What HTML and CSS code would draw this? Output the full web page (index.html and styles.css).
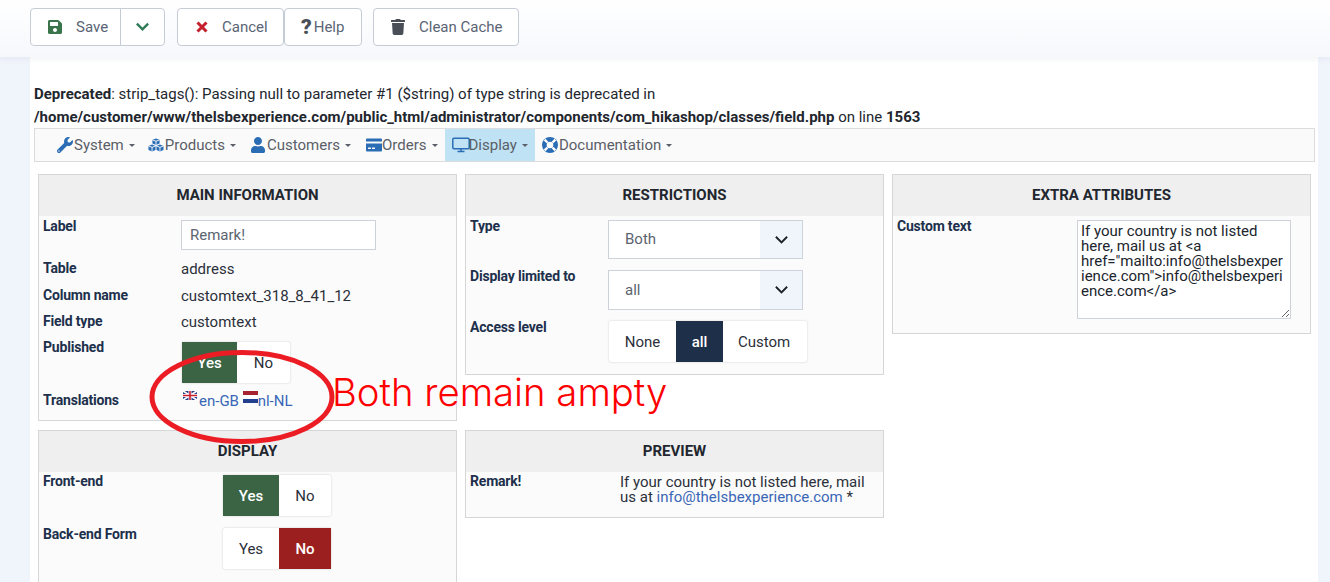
FILE: index.html
```
<!DOCTYPE html>
<html lang="en">
<head>
<meta charset="utf-8">
<title>Field</title>
<link rel="stylesheet" href="styles.css">
</head>
<body>
<header class="toolbar">
  <div class="btn-group">
    <button class="btn btn-save"><svg class="ico ico-save" viewBox="0 0 448 512"><path d="M433.941 129.941l-83.882-83.882A48 48 0 0 0 316.118 32H48C21.490 32 0 53.490 0 80v352c0 26.510 21.490 48 48 48h352c26.510 0 48-21.490 48-48V163.882a48 48 0 0 0-14.059-33.941zM224 416c-35.346 0-64-28.654-64-64 0-35.346 28.654-64 64-64s64 28.654 64 64c0 35.346-28.654 64-64 64zm96-304.520V212c0 6.627-5.373 12-12 12H76c-6.627 0-12-5.373-12-12V108c0-6.627 5.373-12 12-12h228.520c3.183 0 6.235 1.264 8.485 3.515l3.480 3.480A11.996 11.996 0 0 1 320 111.480z"/></svg><span>Save</span></button>
    <button class="btn btn-caret"><svg class="chev" viewBox="0 0 16 10"><polyline points="2,1.500 8,7.500 14,1.500"/></svg></button>
  </div>
  <div class="btn-pair">
    <button class="btn btn-cancel"><svg class="ico-x" viewBox="0 0 12 12"><path d="M1.500 1.500L10.500 10.500M10.500 1.500L1.500 10.500"/></svg><span>Cancel</span></button>
    <button class="btn btn-help"><b class="qmark">?</b><span>Help</span></button>
  </div>
  <button class="btn btn-clean"><svg class="ico ico-trash" viewBox="0 0 448 512"><path d="M432 32H312l-9.400-18.700A24 24 0 0 0 281.100 0H166.800a23.720 23.720 0 0 0-21.400 13.300L136 32H16A16 16 0 0 0 0 48v32a16 16 0 0 0 16 16h416a16 16 0 0 0 16-16V48a16 16 0 0 0-16-16zM53.200 467a48 48 0 0 0 47.900 45h245.800a48 48 0 0 0 47.900-45L416 128H32z"/></svg><span>Clean Cache</span></button>
</header>

<main class="content">
  <p class="notice"><b>Deprecated</b>: strip_tags(): Passing null to parameter #1 ($string) of type string is deprecated in<br><b>/home/customer/www/thelsbexperience.com/public_html/administrator/components/com_hikashop/classes/field.php</b> on line <b>1563</b></p>

  <nav class="menu">
    <a class="menu-item item-system"><svg class="mi" viewBox="0 0 512 512"><path d="M507.730 109.100c-2.240-9.030-13.540-12.090-20.120-5.510l-74.360 74.360-67.880-11.310-11.310-67.880 74.360-74.360c6.620-6.620 3.430-17.900-5.660-20.160-47.380-11.740-99.550.91-136.580 37.930-39.640 39.640-50.550 97.100-34.050 147.200L18.740 402.760c-24.990 24.990-24.990 65.510 0 90.500 24.990 24.990 65.510 24.990 90.500 0l213.210-213.210c50.120 16.710 107.470 5.680 147.370-34.220 37.070-37.070 49.700-89.320 37.910-136.730zM64 472c-13.250 0-24-10.750-24-24 0-13.260 10.750-24 24-24s24 10.740 24 24c0 13.250-10.750 24-24 24z"/></svg>System<i class="caret"></i></a>
    <a class="menu-item"><svg class="mi" viewBox="0 0 17 15"><path d="M8.500 0.500L12.300 2V6L8.500 7.500L4.700 6V2Z"/><path d="M4.300 7L8 8.500V12.700L4.300 14.300L0.500 12.700V8.500Z"/><path d="M12.700 7L16.500 8.500V12.700L12.700 14.300L9 12.700V8.500Z"/><path class="cut" d="M4.700 2L8.500 3.500L12.300 2M8.500 3.500V7.500M.5 8.500L4.300 10L8 8.500M4.300 10V14.300M9 8.500L12.700 10L16.500 8.500M12.700 10V14.300"/></svg>Products<i class="caret"></i></a>
    <a class="menu-item item-customers"><svg class="mi" viewBox="0 0 448 512"><path d="M224 256c70.700 0 128-57.300 128-128S294.700 0 224 0 96 57.300 96 128s57.300 128 128 128zm89.600 32h-16.700c-22.200 10.200-46.900 16-72.900 16s-50.600-5.800-72.900-16h-16.700C60.200 288 0 348.200 0 422.400V464c0 26.500 21.500 48 48 48h352c26.500 0 48-21.500 48-48v-41.600c0-74.200-60.200-134.400-134.400-134.400z"/></svg>Customers<i class="caret"></i></a>
    <a class="menu-item"><svg class="mi mi-card" viewBox="0 0 16 13"><path d="M1 0H15A1 1 0 0 1 16 1V3H0V1A1 1 0 0 1 1 0ZM0 5H16V12A1 1 0 0 1 15 13H1A1 1 0 0 1 0 12ZM2 9V10.500H5V9ZM6 9V10.500H9V9Z" fill-rule="evenodd"/></svg>Orders<i class="caret"></i></a>
    <a class="menu-item is-active"><svg class="mi mi-desk" viewBox="0 0 18 15"><rect x="0.800" y="0.800" width="16.400" height="10.400" rx="1.200"/><path d="M5.500 14H12.500M9 11.500V14"/></svg>Display<i class="caret"></i></a>
    <a class="menu-item"><svg class="mi mi-ring" viewBox="0 0 16 16"><circle cx="8" cy="8" r="8"/><circle class="hole" cx="8" cy="8" r="3.300"/><path class="cut" d="M2.600 2.600L5.500 5.500M13.400 2.600L10.500 5.500M2.600 13.400L5.500 10.500M13.400 13.400L10.500 10.500"/></svg>Documentation<i class="caret"></i></a>
  </nav>

  <div class="panels">
    <section class="panel">
      <h2 class="panel-title">MAIN INFORMATION</h2>
      <div class="row row-input"><label class="lbl">Label</label><input class="text-input" value="Remark!"></div>
      <div class="row row-wide"><label class="lbl">Table</label><span class="val">address</span></div>
      <div class="row"><label class="lbl">Column name</label><span class="val">customtext_318_8_41_12</span></div>
      <div class="row"><label class="lbl">Field type</label><span class="val">customtext</span></div>
      <div class="row row-pub"><label class="lbl">Published</label>
        <div class="toggle toggle-pub"><span class="seg seg-yes on-green">Yes</span><span class="seg seg-no">No</span></div></div>
      <div class="row row-last"><label class="lbl">Translations</label>
        <span class="val val-flags">
          <svg class="flag" viewBox="0 0 14 9"><rect width="14" height="9" fill="#2b3f86"/><path d="M0 0L14 9M14 0L0 9" stroke="#fff" stroke-width="1.800"/><path d="M7 0V9M0 4.500H14" stroke="#fff" stroke-width="3"/><path d="M7 0V9M0 4.500H14" stroke="#c8202f" stroke-width="1.600"/></svg><a class="link">en-GB</a>
          <svg class="flag flag-nl" viewBox="0 0 15 12"><rect width="15" height="4" fill="#a6232f"/><rect y="4" width="15" height="4" fill="#fff"/><rect y="8" width="15" height="4" fill="#23408e"/></svg><a class="link">nl-NL</a>
        </span></div>
    </section>

    <section class="panel panel-short">
      <h2 class="panel-title">RESTRICTIONS</h2>
      <div class="row row-sel"><label class="lbl">Type</label>
        <div class="select"><span class="select-val">Both</span><span class="select-btn"><svg class="chev chev-dark" viewBox="0 0 16 10"><polyline points="2,1.500 8,7.500 14,1.500"/></svg></span></div></div>
      <div class="row row-sel row-sel-tall"><label class="lbl">Display limited to</label>
        <div class="select"><span class="select-val">all</span><span class="select-btn"><svg class="chev chev-dark" viewBox="0 0 16 10"><polyline points="2,1.500 8,7.500 14,1.500"/></svg></span></div></div>
      <div class="row row-access"><label class="lbl">Access level</label>
        <div class="toggle toggle-access"><span class="seg seg-none">None</span><span class="seg seg-all on-navy">all</span><span class="seg seg-custom">Custom</span></div></div>
    </section>

    <section class="panel panel-extra">
      <h2 class="panel-title">EXTRA ATTRIBUTES</h2>
      <div class="row row-text"><label class="lbl">Custom text</label>
        <textarea class="textarea" spellcheck="false">If your country is not listed here, mail us at &lt;a href="mailto:info@thelsbexperience.com"&gt;info@thelsbexperience.com&lt;/a&gt;</textarea></div>
    </section>

    <section class="panel panel-display">
      <h2 class="panel-title">DISPLAY</h2>
      <div class="row row-tog"><label class="lbl">Front-end</label>
        <div class="toggle"><span class="seg seg-yes on-green">Yes</span><span class="seg seg-no">No</span></div></div>
      <div class="row row-tog"><label class="lbl">Back-end Form</label>
        <div class="toggle"><span class="seg seg-yes">Yes</span><span class="seg seg-no on-red">No</span></div></div>
    </section>

    <section class="panel panel-preview">
      <h2 class="panel-title">PREVIEW</h2>
      <div class="row row-prev"><label class="lbl">Remark!</label>
        <div class="prev-val">If your country is not listed here, mail us at <a class="link">info@thelsbexperience.com</a> *</div></div>
    </section>
  </div>
</main>

<svg class="circle-note" viewBox="0 0 190 96"><ellipse cx="95" cy="48" rx="90" ry="44.500"/></svg>
<div class="note-text">Both remain ampty</div>
</body>
</html>
```
FILE: styles.css
```
* { box-sizing: border-box; }
html, body { margin: 0; height: 582px; overflow: hidden; }
body { background: #f0f4fb; font-family: Roboto, "Liberation Sans", sans-serif; font-size: 15px; color: #22262e; position: relative; }

.toolbar { height: 57px; padding: 8px 0 0 30px; display: flex; align-items: flex-start; background: linear-gradient(#fff, #f6f8fc); box-shadow: 0 2px 6px rgba(30,50,90,.06); position: relative; }
.btn { height: 38px; display: flex; align-items: center; background: #fff; border: 1px solid #c6ccd6; border-radius: 4px; font: 400 15px Roboto, sans-serif; color: #5a6474; padding: 0; }
.btn-group { display: flex; margin-right: 12px; }
.btn-save { width: 91px; padding-left: 17px; border-radius: 4px 0 0 4px; border-right: 1px solid #c6ccd6; }
.btn-caret { width: 45px; margin-left: -1px; justify-content: center; border-radius: 0 4px 4px 0; }
.btn-pair { display: flex; margin-right: 11px; }
.btn-cancel { width: 107px; padding-left: 18px; }
.btn-help { width: 78px; padding-left: 16px; }
.btn-clean { width: 146px; padding-left: 17px; }
.ico { width: 14px; height: 16px; flex: none; }
.ico-save { fill: #39744b; margin-right: 14px; }
.ico-trash { fill: #4a4f57; margin-right: 14px; }
.ico-x { width: 12px; height: 12px; margin-right: 14px; flex: none; fill: none; stroke: #c4202e; stroke-width: 3; }
.chev { width: 15px; height: 10px; fill: none; stroke: #2f7a55; stroke-width: 2.600; }
.chev-dark { stroke: #1d2128; stroke-width: 2; }
.qmark { font-size: 21px; font-weight: 900; color: #4a4f57; margin-right: 2px; }

.content { margin: 0 12px 0 30px; height: 525px; padding: 26px 3px 0 4px; background: #fff; }
.notice { margin: 0; font-size: 15px; line-height: 23px; color: #22262e; height: 45px; white-space: nowrap; }

.menu { height: 34px; padding-left: 15px; display: flex; background: #fafafa; border: 1px solid #dcdcdc; color: #5a5f68; font-size: 15px; }
.menu-item { display: flex; align-items: center; padding: 0 7px; height: 32px; }
.item-system { padding-right: 6px; }
.item-customers { padding-right: 8px; }
.is-active { background: #bfe2f5; }
.mi { width: 16px; height: 16px; margin-right: 1px; fill: #2a6db5; flex: none; }
.mi .cut { stroke: #fafafa; stroke-width: 1; fill: none; }
.mi .hole { fill: #fff; }
.mi-ring .cut { stroke: #fff; stroke-width: 2.400; }
.mi-card { margin-right: 0; }
.mi-desk { width: 18px; margin-right: -1px; fill: none; stroke: #2a6db5; stroke-width: 1.500; }
.caret { width: 0; height: 0; margin-left: 5px; border: 3px solid transparent; border-top-color: #5a5f68; border-bottom: 0; }

.panels { margin: 12px 0 0 4px; display: grid; grid-template-columns: repeat(3, 419px); grid-template-rows: 247px auto; gap: 9px 8px; align-items: start; }
.panel { border: 1px solid #d6d6d6; background: #fbfbfb; height: 247px; }
.panel-short { height: 201px; }
.panel-extra { height: 160px; }
.panel-display { height: 160px; }
.panel-preview { height: 88px; }
.panel-title { margin: 0; height: 41px; background: #efefef; font-size: 15px; font-weight: 700; line-height: 41px; text-align: center; color: #22262e; }

.row { display: grid; grid-template-columns: 138px 1fr; margin-bottom: 4px; padding-left: 4px; padding-right: 4px; }
.lbl { font-weight: 700; font-size: 14px; line-height: 20px; height: 17px; overflow: hidden; color: #20304c; letter-spacing: -.2px; }
.val { font-size: 15px; line-height: 22px; color: #2b303a; }
.row-input { height: 38px; }
.row-wide { height: 23px; }
.row-pub { height: 49px; }
.text-input { margin-top: 4px; width: 195px; height: 30px; border: 1px solid #ced3db; background: #fff; padding: 0 8px; font: 15px Roboto, sans-serif; color: #5c6470; outline: 0; border-radius: 0; }

.toggle { display: inline-flex; width: max-content; height: 41px; margin: 5px 0 0 1px; background: #fff; box-shadow: 0 0 2px rgba(0,0,0,.22); border-radius: 2px; font-size: 15px; color: #2b303a; }
.seg { display: flex; align-items: center; justify-content: center; width: 52px; }
.seg-yes { width: 56px; }
.toggle-pub .seg-no { width: 53px; }
.toggle-pub .seg-yes { width: 55px; }
.seg-none { width: 67px; }
.seg-all { width: 47px; }
.seg-custom { width: 84px; padding-right: 2px; }
.on-green { background: #3a6444; color: #fff; font-weight: 500; }
.on-navy { background: #1d2f49; color: #fff; font-weight: 500; }
.on-red { background: #9c1f1f; color: #fff; font-weight: 500; }
.row-last { height: 30px; margin: 0; }
.val-flags { display: block; padding: 1px 0 0 2px; line-height: 20px; white-space: nowrap; }
.flag { width: 14px; height: 9px; vertical-align: 6px; margin-right: 2px; }
.flag-nl { width: 15px; height: 12px; vertical-align: 3px; margin-right: 0; }
.link { color: #3a66b7; }

.row-sel { height: 47px; margin-bottom: 3px; }
.row-sel-tall { height: 47px; margin-bottom: 4px; }
.row-sel-tall .select { height: 40px; }
.select { margin-top: 4px; width: 195px; height: 39px; display: flex; align-items: stretch; border: 1px solid #ced3db; background: #fff; font-size: 15px; color: #5c6470; }
.select-val { flex: 1; padding: 0 0 1px 16px; display: flex; align-items: center; }
.row-sel-tall .select-val { padding-bottom: 0; }
.select-btn { width: 42px; background: #f0f4fb; display: flex; align-items: center; justify-content: center; }
.row-access { margin: 0; }
.toggle-access { margin-top: 4px; }

.row-text { grid-template-columns: 180px 1fr; }
.textarea { margin-top: 4px; width: 214px; height: 99px; padding: 3px 5px 3px 3px; border: 1px solid #ced3db; background: #fff; font: 15px/15px Roboto, sans-serif; color: #20252d; outline: 0; border-radius: 0; overflow: hidden; }

.row-tog { grid-template-columns: 179px 1fr; height: 48px; margin-bottom: 5px; }
.row-tog .toggle { margin-top: 3px; }
.row-tog .lbl, .row-prev .lbl { margin-top: -1px; }
.row-prev { grid-template-columns: 150px 1fr; padding-right: 12px; }
.prev-val { font-size: 15px; line-height: 15px; padding-top: 3px; color: #2b303a; }

.circle-note { position: absolute; left: 147px; top: 349px; width: 190px; height: 96px; fill: none; stroke: #ec1c24; stroke-width: 5; }
.note-text { position: absolute; left: 332px; top: 369px; font: 300 38.300px Inter, sans-serif; color: #f00; white-space: nowrap; }
```
